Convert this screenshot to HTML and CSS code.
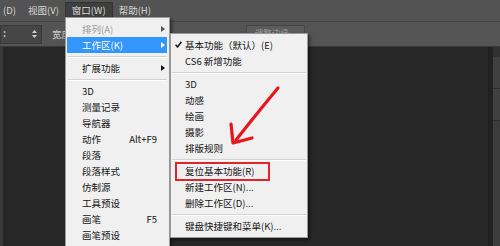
FILE: index.html
```html
<!DOCTYPE html>
<html lang="zh-CN">
<head>
<meta charset="utf-8">
<title>窗口 - 工作区</title>
<link rel="stylesheet" href="styles.css">
</head>
<body>
<div class="app">
  <div class="menubar">
    <span class="mb-item first">(D)</span>
    <span class="mb-item">视图(V)</span>
    <span class="mb-item active">窗口(W)</span>
    <span class="mb-item">帮助(H)</span>
  </div>
  <div class="options">
    <div class="select">
      <span class="dots">:</span>
      <svg class="spin" width="5" height="8" viewBox="0 0 5 8"><path d="M2.5 0 L5 3 L0 3 Z M0 5 L5 5 L2.5 8 Z" fill="#d0d0d0"/></svg>
    </div>
    <span class="opt-label">宽度:</span>
    <div class="opt-btn">调整边缘...</div>
  </div>
  <div class="work">
    <div class="toolstrip"></div>
    <div class="canvas"></div>
    <div class="gutter"></div>
    <div class="panel">
      <div class="panel-top"></div>
      <div class="panel-sec"></div>
      <div class="panel-sec"></div>
      <div class="panel-rest"></div>
    </div>
  </div>

  <div class="menu main">
    <div class="item disabled">排列(A)<span class="sub-arrow"></span></div>
    <div class="item hl">工作区(K)<span class="sub-arrow"></span></div>
    <div class="sep"></div>
    <div class="item">扩展功能<span class="sub-arrow"></span></div>
    <div class="sep"></div>
    <div class="item">3D</div>
    <div class="item">测量记录</div>
    <div class="item">导航器</div>
    <div class="item">动作<span class="key">Alt+F9</span></div>
    <div class="item">段落</div>
    <div class="item">段落样式</div>
    <div class="item">仿制源</div>
    <div class="item">工具预设</div>
    <div class="item">画笔<span class="key">F5</span></div>
    <div class="item">画笔预设</div>
  </div>

  <div class="menu sub">
    <div class="item checked"><svg class="check" width="7" height="7" viewBox="0 0 7 7"><path d="M0.6 3.8 L2.6 5.9 L6.4 0.8" fill="none" stroke="#111" stroke-width="1.5"/></svg>基本功能（默认）(E)</div>
    <div class="item">CS6 新增功能</div>
    <div class="sep"></div>
    <div class="item">3D</div>
    <div class="item">动感</div>
    <div class="item">绘画</div>
    <div class="item">摄影</div>
    <div class="item">排版规则</div>
    <div class="sep"></div>
    <div class="item marked">复位基本功能(R)</div>
    <div class="item">新建工作区(N)...</div>
    <div class="item">删除工作区(D)...</div>
    <div class="sep"></div>
    <div class="item">键盘快捷键和菜单(K)...</div>
  </div>

  <svg class="arrow" width="500" height="246" viewBox="0 0 500 246">
    <path d="M278 88 Q258 112 236 140" fill="none" stroke="#e8161c" stroke-width="3.2" stroke-linecap="round"/>
    <path d="M231 124 L233 143 L252 138" fill="none" stroke="#e8161c" stroke-width="3.2" stroke-linecap="round" stroke-linejoin="round"/>
  </svg>
</div>
</body>
</html>
```
FILE: styles.css
```css
html, body {
  margin: 0;
  padding: 0;
  background: #272727;
}
.app {
  position: relative;
  width: 500px;
  height: 246px;
  overflow: hidden;
  display: flex;
  flex-direction: column;
  font-family: "Noto Sans CJK SC", "Microsoft YaHei", sans-serif;
  font-size: 9.5px;
}
.menubar {
  height: 21px;
  box-sizing: border-box;
  padding-top: 2px;
  background: #535353;
  display: flex;
  align-items: flex-start;
  color: #d8d8d8;
}
.mb-item {
  height: 16px;
  line-height: 16px;
  padding: 0 6px;
  box-sizing: border-box;
  white-space: nowrap;
}
.mb-item.first {
  margin-left: -3px;
}
.mb-item.active {
  background: #3f3f3f;
  border: 1px solid #333;
  line-height: 14px;
}
.options {
  height: 26px;
  box-sizing: border-box;
  border-top: 1px solid #444;
  border-bottom: 1px solid #3a3a3a;
  background: #545454;
  display: flex;
  align-items: center;
  color: #cfcfcf;
}
.select {
  width: 42px;
  height: 19px;
  box-sizing: border-box;
  background: #464646;
  border: 1px solid #3a3a3a;
  display: flex;
  align-items: center;
  justify-content: space-between;
  padding: 0 4px 0 2px;
}
.dots {
  color: #d0d0d0;
  font-weight: bold;
  line-height: 1;
}
.opt-label {
  margin-left: 10px;
}
.opt-btn {
  align-self: flex-start;
  margin-top: 3px;
  margin-left: 172px;
  height: 15px;
  line-height: 12px;
  box-sizing: border-box;
  padding: 0 8px;
  background: #5c5c5c;
  border: 1px solid #454545;
  color: #9c9c9c;
  font-size: 8.5px;
  white-space: nowrap;
}
.work {
  flex: 1;
  display: flex;
}
.toolstrip {
  width: 3px;
  background: #3a3a3a;
}
.canvas {
  flex: 1;
  background: #272727;
}
.gutter {
  width: 4px;
  background: #222;
  border-left: 1px solid #1e1e1e;
}
.panel {
  width: 7px;
  display: flex;
  flex-direction: column;
}
.panel-top {
  height: 10px;
  background: #303030;
}
.panel-sec {
  height: 31px;
  background: #404040;
  border-bottom: 1px solid #2c2c2c;
}
.panel-rest {
  flex: 1;
  background: #3c3c3c;
}

.menu {
  position: absolute;
  background: #f0f0f0;
  border: 1px solid #9a9a9a;
  box-shadow: 2px 2px 3px rgba(0, 0, 0, 0.45);
  padding: 3px 0;
  color: #141414;
}
.menu.main {
  left: 65px;
  top: 17px;
  width: 103px;
}
.menu.sub {
  left: 170px;
  top: 33px;
  width: 136px;
}
.item {
  position: relative;
  height: 16px;
  line-height: 16px;
  display: flex;
  white-space: nowrap;
}
.main .item {
  margin: 0 2px 0 1px;
  padding-left: 15px;
}
.sub .item {
  padding-left: 14px;
}
.item.disabled {
  color: #9c9c9c;
}
.item.hl {
  background: #3396fa;
  color: #fff;
}
.sub-arrow {
  position: absolute;
  right: 2px;
  top: 4.5px;
  width: 0;
  height: 0;
  border-left: 4px solid #141414;
  border-top: 3.5px solid transparent;
  border-bottom: 3.5px solid transparent;
}
.item.hl .sub-arrow {
  border-left-color: #fff;
}
.item.disabled .sub-arrow {
  border-left-color: #555;
}
.key {
  margin-left: auto;
  padding-right: 10px;
}
.check {
  position: absolute;
  left: 4px;
  top: 4px;
}
.sep {
  height: 1px;
  background: #d3d3d3;
  border-bottom: 1px solid #fdfdfd;
  margin: 3px 2px 2px 2px;
}
.sub .sep {
  margin: 3px 1px 2px 1px;
}
.item.marked::after {
  content: "";
  position: absolute;
  left: 4px;
  top: -1px;
  width: 95px;
  height: 19px;
  box-sizing: border-box;
  border: 2px solid #e0262c;
}
.arrow {
  position: absolute;
  left: 0;
  top: 0;
  pointer-events: none;
}
```
